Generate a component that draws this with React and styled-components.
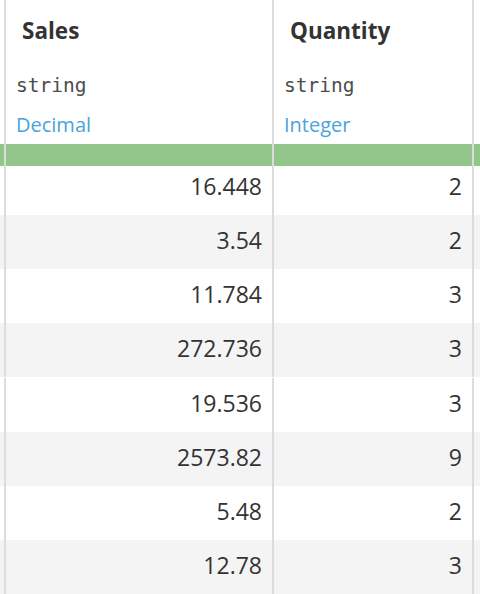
import React from "react";
import styled, { createGlobalStyle } from "styled-components";

const GlobalStyle = createGlobalStyle`
  html, body {
    margin: 0;
    padding: 0;
    background: #fff;
    overflow: hidden;
  }
  body {
    font-family: "Open Sans", "Noto Sans", sans-serif;
    color: #333;
  }
`;

const columns = [
  { name: "Sales", storage: "string", meaning: "Decimal" },
  { name: "Quantity", storage: "string", meaning: "Integer" },
];

const rows = [
  ["16.448", "2"],
  ["3.54", "2"],
  ["11.784", "3"],
  ["272.736", "3"],
  ["19.536", "3"],
  ["2573.82", "9"],
  ["5.48", "2"],
  ["12.78", "3"],
];

const Table = styled.div`
  display: grid;
  grid-template-columns: 4px 268px 200px 1fr;
  width: 480px;
  height: 594px;
  overflow: hidden;
`;

const Cell = styled.div`
  box-sizing: border-box;
  border-left: ${(p) => (p.$edge ? "none" : "2px solid #dcdcdc")};
  background: ${(p) => (p.$striped ? "#f4f4f4" : "#fff")};
`;

const HeaderCell = styled(Cell)`
  height: 144px;
  padding: 16px 0 0 10px;
`;

const Title = styled.div`
  font-size: 22.5px;
  font-weight: 700;
  line-height: 30px;
  padding-left: 6px;
  color: #333;
`;

const Storage = styled.div`
  margin-top: 28px;
  font-family: "DejaVu Sans Mono", "Liberation Mono", monospace;
  font-size: 19.5px;
  line-height: 24px;
  color: #4d4d4d;
`;

const Meaning = styled.div`
  margin-top: 15px;
  font-size: 20px;
  line-height: 24px;
  color: #4ba3dc;
`;

const QualityCell = styled(Cell)`
  height: 22px;
  background: #93c68b;
`;

const ValueCell = styled(Cell)`
  height: ${(p) => (p.$first ? "49px" : "54px")};
  padding: 0 10px ${(p) => (p.$first ? "9px" : "4px")} 0;
  font-size: 23px;
  line-height: ${(p) => (p.$first ? "40px" : "50px")};
  text-align: right;
  color: #333;
  white-space: nowrap;
`;

export default function App() {
  return (
    <>
      <GlobalStyle />
      <Table>
        <HeaderCell $edge />
        {columns.map((c) => (
          <HeaderCell key={c.name}>
            <Title>{c.name}</Title>
            <Storage>{c.storage}</Storage>
            <Meaning>{c.meaning}</Meaning>
          </HeaderCell>
        ))}
        <HeaderCell />

        <QualityCell $edge />
        <QualityCell />
        <QualityCell />
        <QualityCell />

        {rows.map((r, i) => {
          const striped = i % 2 === 1;
          const first = i === 0;
          return (
            <React.Fragment key={i}>
              <ValueCell $edge $striped={striped} $first={first} />
              <ValueCell $striped={striped} $first={first}>
                {r[0]}
              </ValueCell>
              <ValueCell $striped={striped} $first={first}>
                {r[1]}
              </ValueCell>
              <ValueCell $striped={striped} $first={first} />
            </React.Fragment>
          );
        })}
      </Table>
    </>
  );
}
